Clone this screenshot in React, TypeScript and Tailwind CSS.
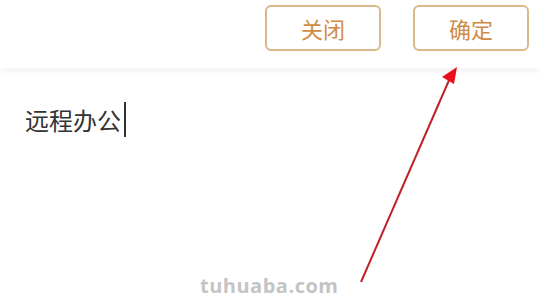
import React from 'react';

export default function App() {
  return (
    <div className="relative w-[540px] h-[300px] bg-white overflow-hidden font-['Noto_Sans_CJK_SC','Noto_Sans',sans-serif]">
      {/* Top bar */}
      <div className="h-[68px] flex items-start justify-end gap-[32px] pt-[5px] pr-[11px] bg-white shadow-[0_3px_8px_rgba(0,0,0,0.06)]">
        <button className="w-[116px] h-[46px] rounded-[6px] border-2 border-[#dbb78c] text-[#cf8b45] text-[22px] leading-none">
          关闭
        </button>
        <button className="w-[116px] h-[46px] rounded-[6px] border-2 border-[#dbb78c] text-[#cf8b45] text-[22px] leading-none">
          确定
        </button>
      </div>

      {/* Input area */}
      <div className="px-[25px] pt-[34px] flex items-center">
        <span className="text-[24px] leading-none text-[#333]">远程办公</span>
        <span className="ml-[3px] w-[2px] h-[35px] bg-[#333]" />
      </div>

      {/* Annotation arrow */}
      <svg className="absolute left-0 top-0" width="540" height="300" viewBox="0 0 540 300">
        <line x1="361" y1="282" x2="450" y2="78" stroke="#c0202a" strokeWidth="2" />
        <polygon points="457,67 442,77 454,84" fill="#e8101a" />
      </svg>

      {/* Watermark */}
      <div className="absolute left-[200px] top-[271px] text-[20px] font-bold text-[#c4c4c4] font-['Open_Sans',sans-serif] tracking-[0.5px]">
        tuhuaba.com
      </div>
    </div>
  );
}
